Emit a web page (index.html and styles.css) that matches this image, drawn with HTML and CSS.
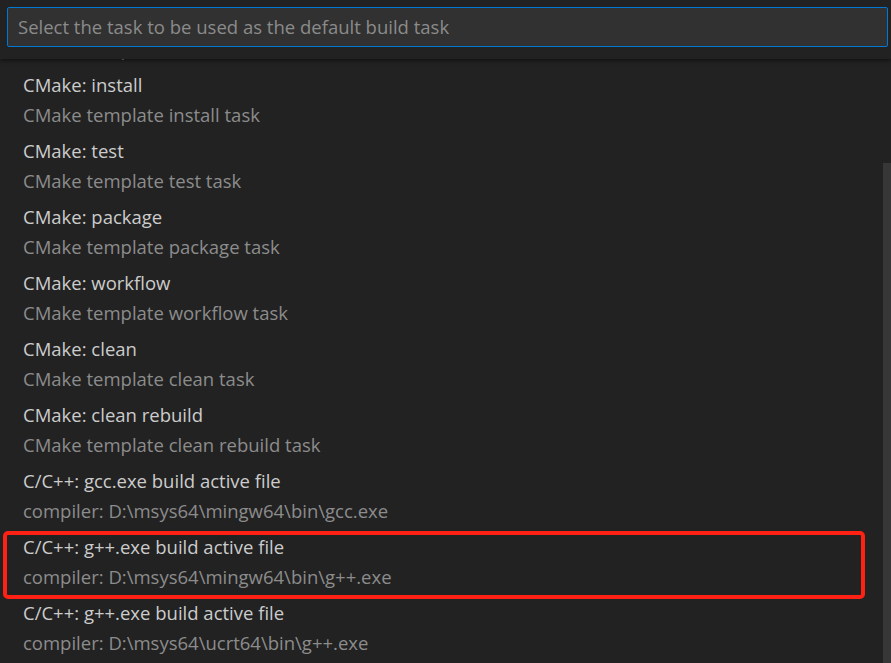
FILE: index.html
```html
<!DOCTYPE html>
<html lang="en">
<head>
<meta charset="utf-8">
<title>Quick pick</title>
<link rel="stylesheet" href="styles.css">
</head>
<body>
<div class="picker">
  <div class="header">
    <div class="input">Select the task to be used as the default build task</div>
  </div>
  <div class="viewport">
    <div class="list">
      <div class="item partial"><div class="desc">CMake template build task</div></div>
      <div class="item"><div class="label">CMake: install</div><div class="desc">CMake template install task</div></div>
      <div class="item"><div class="label">CMake: test</div><div class="desc">CMake template test task</div></div>
      <div class="item"><div class="label">CMake: package</div><div class="desc">CMake template package task</div></div>
      <div class="item"><div class="label">CMake: workflow</div><div class="desc">CMake template workflow task</div></div>
      <div class="item"><div class="label">CMake: clean</div><div class="desc">CMake template clean task</div></div>
      <div class="item"><div class="label">CMake: clean rebuild</div><div class="desc">CMake template clean rebuild task</div></div>
      <div class="item"><div class="label">C/C++: gcc.exe build active file</div><div class="desc">compiler: D:\msys64\mingw64\bin\gcc.exe</div></div>
      <div class="item marked"><div class="label">C/C++: g++.exe build active file</div><div class="desc">compiler: D:\msys64\mingw64\bin\g++.exe</div></div>
      <div class="item"><div class="label">C/C++: g++.exe build active file</div><div class="desc">compiler: D:\msys64\ucrt64\bin\g++.exe</div></div>
    </div>
    <div class="scrollbar"></div>
  </div>
</div>
</body>
</html>
```
FILE: styles.css
```css
html, body {
  margin: 0;
  padding: 0;
  background: #222222;
  width: 891px;
  height: 663px;
  overflow: hidden;
}
.picker {
  font-family: "Open Sans", "Noto Sans", sans-serif;
  position: relative;
  height: 663px;
  display: flex;
  flex-direction: column;
}
.header {
  height: 59px;
  box-sizing: border-box;
  padding: 7px 3px 0 7px;
  background: #222222;
  box-shadow: 0 2px 4px rgba(0, 0, 0, 0.45);
  position: relative;
  z-index: 2;
  flex: none;
}
.input {
  height: 40px;
  box-sizing: border-box;
  border: 1px solid #0078d4;
  border-radius: 2px;
  background: #313131;
  color: #8b8b8b;
  font-size: 18.5px;
  line-height: 37px;
  padding-left: 10px;
  white-space: nowrap;
}
.viewport {
  flex: 1;
  overflow: hidden;
  position: relative;
}
.list {
  margin-top: -25px;
}
.item {
  height: 66px;
  box-sizing: border-box;
  padding: 3px 0 3px 23px;
  position: relative;
}
.item.partial {
  height: 33px;
  padding-top: 0;
}
.label {
  height: 30px;
  line-height: 30px;
  font-size: 18.5px;
  color: #cccccc;
  white-space: nowrap;
}
.desc {
  height: 30px;
  line-height: 30px;
  font-size: 18.5px;
  color: #8c8c8c;
  white-space: nowrap;
}
.marked::after {
  content: "";
  position: absolute;
  left: 3px;
  top: 2px;
  width: 862px;
  height: 68px;
  box-sizing: border-box;
  border: 4px solid #ff2214;
  border-radius: 5px;
}
.scrollbar {
  position: absolute;
  right: 0;
  top: 104px;
  width: 8px;
  bottom: 0;
  background: #373737;
}
```
